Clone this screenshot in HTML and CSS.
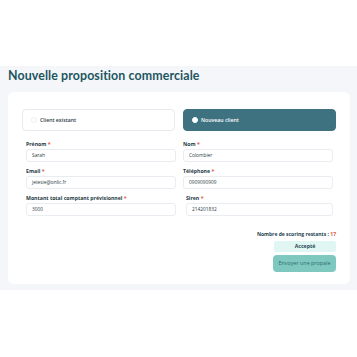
FILE: index.html
```html
<!DOCTYPE html>
<html>
<head>
<meta charset="utf-8">
<link rel="stylesheet" href="styles.css">
</head>
<body>
<div class="top"></div>
<section class="main">
  <h1 class="title">Nouvelle proposition commerciale</h1>
  <div class="card">
    <div class="choices">
      <div class="choice"><span class="radio"></span>Client existant</div>
      <div class="choice active"><span class="radio on"></span>Nouveau client</div>
    </div>
    <div class="grid">
      <div class="field"><label>Prénom <span class="req">*</span></label><div class="input">Sarah</div></div>
      <div class="field"><label>Nom <span class="req">*</span></label><div class="input">Colombier</div></div>
      <div class="field"><label>Email <span class="req">*</span></label><div class="input">jetesie@onlic.fr</div></div>
      <div class="field"><label>Téléphone <span class="req">*</span></label><div class="input">0909090909</div></div>
      <div class="field"><label>Montant total comptant prévisionnel <span class="req">*</span></label><div class="input">3000</div></div>
      <div class="field siren"><label>Siren <span class="req">*</span></label><div class="input">214201832</div></div>
    </div>
    <div class="actions">
      <div class="count">Nombre de scoring restants : <span class="req">17</span></div>
      <div class="status">Accepté</div>
      <div class="send">Envoyer une propale</div>
    </div>
  </div>
</section>
</body>
</html>
```
FILE: styles.css
```css
* { box-sizing: border-box; }
html, body { margin: 0; padding: 0; background: #fff; }
body { font-family: "Open Sans", "Liberation Sans", sans-serif; color: #1f3a44; width: 357px; }
.top { height: 66px; background: #fff; }
.main { background: #f4f6f9; padding: 2px 7px 6px 8px; }
.title { margin: 0 0 9px 0; font-family: Lato, "Open Sans", sans-serif; font-weight: 700; font-size: 12.4px; line-height: 15px; color: #1d5561; letter-spacing: 0.1px; }
.card { background: #fff; border-radius: 6px; padding: 17px 14px 12px 14px; }
.choices { display: grid; grid-template-columns: 1fr 1fr; gap: 8px; }
.choice { height: 22px; border: 1px solid #e6e9ee; border-radius: 4px; display: flex; align-items: center; padding-left: 8px; font-size: 5.2px; font-weight: 600; color: #2b3d47; }
.choice.active { background: #3e7280; border-color: #3e7280; color: #fff; }
.radio { width: 6px; height: 6px; border-radius: 50%; border: 0.6px solid #eef0f3; margin-right: 3px; }
.radio.on { background: #fff; border-color: #fff; }
.grid { display: grid; grid-template-columns: 150px 150px; column-gap: 7px; row-gap: 6px; padding: 10px 4px 0 4px; }
.field label { display: block; font-size: 5.2px; font-weight: 700; color: #253a45; line-height: 7px; margin-bottom: 1px; }
.req { color: #e4573d; }
.input { height: 13px; border: 1px solid #e9ecf0; border-radius: 3px; font-size: 4.8px; line-height: 11px; padding-left: 5px; color: #2a3b44; }
.siren { padding-left: 3px; }
.actions { display: flex; flex-direction: column; align-items: flex-end; padding-top: 15px; }
.count { font-size: 5px; font-weight: 700; color: #1f4552; line-height: 7px; margin-bottom: 3px; }
.status { width: 62px; height: 11px; background: #e0f6f3; border-radius: 2px; font-size: 5.2px; font-weight: 700; color: #1f4552; text-align: center; line-height: 11px; margin-bottom: 3px; }
.send { width: 63px; height: 17px; background: #7ec8c0; border-radius: 4px; font-size: 5.4px; color: #2f6c73; text-align: center; line-height: 17px; }
```
